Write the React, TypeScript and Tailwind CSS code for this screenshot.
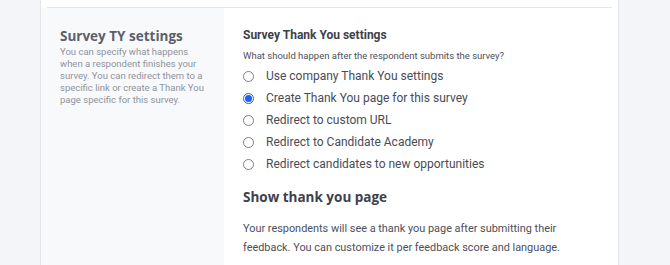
import React from "react";

const options = [
  "Use company Thank You settings",
  "Create Thank You page for this survey",
  "Redirect to custom URL",
  "Redirect to Candidate Academy",
  "Redirect candidates to new opportunities",
];

function Radio({ label, checked = false }: { label: string; checked?: boolean }) {
  return (
    <label className="flex items-center h-[22px]">
      <span
        className={
          checked
            ? "w-[11px] h-[11px] rounded-full border border-[#1a62f0] flex items-center justify-center"
            : "w-[11px] h-[11px] rounded-full border border-[#7b7f88]"
        }
      >
        {checked && <span className="w-[7px] h-[7px] rounded-full bg-[#1a62f0]" />}
      </span>
      <span className="ml-[12px] text-[12px] text-[#474c56]">{label}</span>
    </label>
  );
}

export default function App() {
  const selected = 1;
  return (
    <div className="flex h-[265px] overflow-hidden bg-[#f4f5f8] font-['Roboto',sans-serif]">
      <div className="w-[40px] shrink-0" />
      <div className="w-[579px] shrink-0 flex flex-col border-x border-[#e4e6eb] bg-white">
        <div className="h-[8px] mx-[6px] border-b border-[#e3e5ea]" />
        <div className="flex flex-1">
          {/* Left description */}
          <div className="w-[183px] shrink-0 bg-[#f8f9fb] pl-[19px] pr-[4px] pt-[18px]">
            <h2 className="font-['Open_Sans',sans-serif] font-bold text-[13.5px] leading-[20px] text-[#5a5f6b]">
              Survey TY settings
            </h2>
            <p className="text-[9.5px] leading-[12px] text-[#8e939e]">
              You can specify what happens
              <br />
              when a respondent finishes your
              <br />
              survey. You can redirect them to a
              <br />
              specific link or create a Thank You
              <br />
              page specific for this survey.
            </p>
          </div>

          {/* Right settings */}
          <div className="flex-1 pl-[19px] pt-[19px]">
            <h3 className="text-[12px] leading-[16px] font-bold text-[#3d414b]">Survey Thank You settings</h3>
            <p className="mt-[6px] text-[9.5px] leading-[14px] text-[#4b505b]">
              What should happen after the respondent submits the survey?
            </p>
            <div className="mt-[2px] flex flex-col">
              {options.map((o, i) => (
                <Radio key={i} label={o} checked={i === selected} />
              ))}
            </div>
            <h3 className="mt-[13px] font-['Open_Sans',sans-serif] font-bold text-[13.5px] leading-[18px] text-[#3d414b]">
              Show thank you page
            </h3>
            <p className="mt-[13px] text-[10.9px] leading-[19px] text-[#4b505b]">
              Your respondents will see a thank you page after submitting their
              <br />
              feedback. You can customize it per feedback score and language.
            </p>
          </div>
        </div>
      </div>
      <div className="flex-1" />
    </div>
  );
}
